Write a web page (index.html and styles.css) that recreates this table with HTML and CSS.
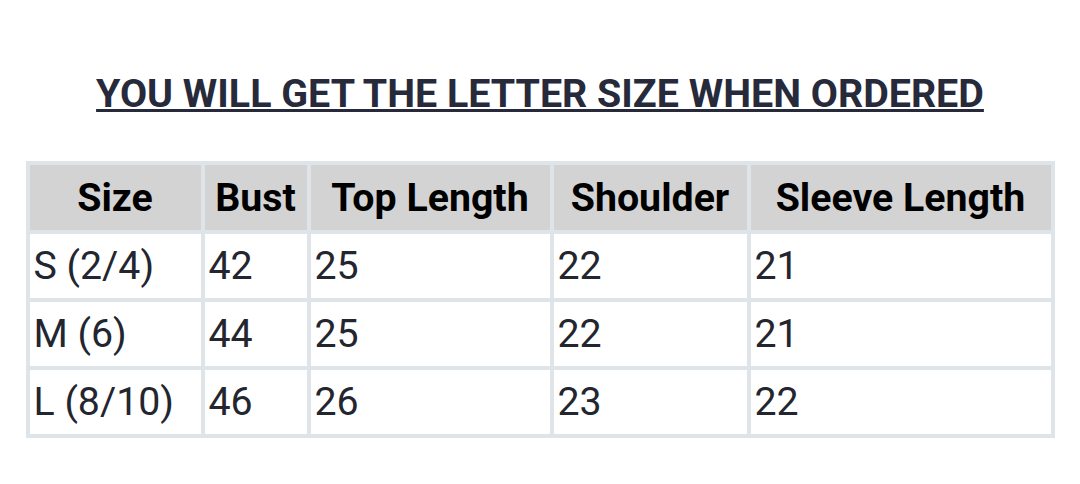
FILE: index.html
```html
<!DOCTYPE html>
<html>
<head>
<meta charset="utf-8">
<link rel="stylesheet" href="styles.css">
</head>
<body>
<div class="page">
  <h1 class="title">YOU WILL GET THE LETTER SIZE WHEN ORDERED</h1>
  <table class="sizes">
    <colgroup>
      <col class="c1"><col class="c2"><col class="c3"><col class="c4"><col class="c5">
    </colgroup>
    <thead>
      <tr><th>Size</th><th>Bust</th><th>Top Length</th><th>Shoulder</th><th>Sleeve Length</th></tr>
    </thead>
    <tbody>
      <tr><td>S (2/4)</td><td>42</td><td>25</td><td>22</td><td>21</td></tr>
      <tr><td>M (6)</td><td>44</td><td>25</td><td>22</td><td>21</td></tr>
      <tr><td>L (8/10)</td><td>46</td><td>26</td><td>23</td><td>22</td></tr>
    </tbody>
  </table>
</div>
</body>
</html>
```

FILE: styles.css
```css
html, body {
  margin: 0;
  padding: 0;
  background: #ffffff;
}
.page {
  padding-top: 73px;
  font-family: Roboto, "Liberation Sans", sans-serif;
  display: flex;
  flex-direction: column;
  align-items: center;
}
.title {
  margin: 0 0 46px 0;
  font-size: 39.4px;
  line-height: 42px;
  font-weight: 700;
  color: #262a3a;
  text-decoration: underline;
  text-align: center;
  white-space: nowrap;
}
.sizes {
  width: 1029px;
  table-layout: fixed;
  border-collapse: separate;
  border-spacing: 4px;
  background: #dfe4e8;
}
.c1 { width: 171px; }
.c2 { width: 102px; }
.c3 { width: 239px; }
.c4 { width: 193px; }
.c5 { width: 300px; }
.sizes th {
  background: #d3d3d3;
  color: #000;
  font-weight: 700;
  font-size: 39.3px;
  height: 65px;
  padding: 0;
  text-align: center;
  vertical-align: middle;
  white-space: nowrap;
}
.sizes td {
  background: #fff;
  color: #23262f;
  font-size: 39.3px;
  height: 64px;
  padding: 0 4px;
  text-align: left;
  vertical-align: middle;
  white-space: nowrap;
}
```
